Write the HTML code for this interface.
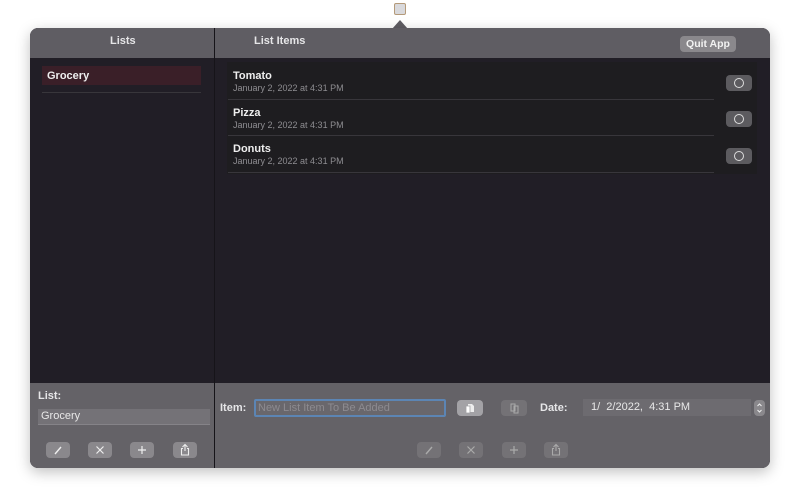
<!DOCTYPE html>
<html><head><meta charset="utf-8"><style>
*{margin:0;padding:0;box-sizing:border-box}
body{width:800px;height:500px;background:#fff;position:relative;overflow:hidden;font-family:"Liberation Sans",sans-serif;}
.a{position:absolute}
.win{left:30px;top:28px;width:740px;height:440px;border-radius:8px;background:#211e26;overflow:hidden;box-shadow:0 4px 14px rgba(0,0,0,0.25)}
.hdr{left:0;top:0;width:740px;height:30px;background:#5f5d63}
.bot{left:0;top:355px;width:740px;height:85px;background:#646267}
.vd{left:184px;top:0;width:1px;height:440px;background:#161419}
.t{color:#e6e6e8;font-weight:bold;font-size:11px}
.btn{background:#8a888c;border-radius:4px;width:24px;height:16px}
.btn2{background:#747276;border-radius:4px;width:24px;height:16px}
.btn svg,.btn2 svg{position:absolute;left:0;top:0}
.nm{color:#eee;font-weight:bold;font-size:11px}
.dt{color:#8e8d91;font-size:9px}
.sep{height:1px;background:#38363b}
.tg{width:26px;height:16px;background:#5c5b5f;border-radius:4px}
.tg:after{content:"";position:absolute;left:8px;top:3px;width:10px;height:10px;border:1.2px solid #ddd;border-radius:50%;box-sizing:border-box}
</style></head><body>
<div class="a" style="left:394px;top:3px;width:12px;height:12px;border:1.5px solid #b49a7a;background:#d9d9dc;border-radius:2px"></div>
<div class="a" style="left:392px;top:20px;width:0;height:0;border-left:8px solid transparent;border-right:8px solid transparent;border-bottom:9px solid #5f5d63"></div>
<div class="a win">
 <div class="a hdr"></div>
 <div class="a t" style="left:80px;top:7px">Lists</div>
 <div class="a t" style="left:224px;top:7px">List Items</div>
 <div class="a" style="left:650px;top:8px;width:56px;height:16px;background:#8a888c;border-radius:4px;color:#f2f2f2;font-size:10.5px;font-weight:bold;text-align:center;line-height:16px">Quit App</div>
 <div class="a" style="left:12px;top:38px;width:159px;height:19px;background:#3a1f28"></div>
 <div class="a nm" style="left:17px;top:42px">Grocery</div>
 <div class="a sep" style="left:12px;top:64px;width:159px"></div>
 <div class="a" style="left:197px;top:34px;width:530px;height:112px;background:#1e1d20"></div>
 <div class="a nm" style="left:203px;top:42px">Tomato</div>
 <div class="a dt" style="left:203px;top:55px">January 2, 2022 at 4:31 PM</div>
 <div class="a sep" style="left:198px;top:71px;width:486px"></div>
 <div class="a tg" style="left:696px;top:47px"></div>
 <div class="a nm" style="left:203px;top:79px">Pizza</div>
 <div class="a dt" style="left:203px;top:92px">January 2, 2022 at 4:31 PM</div>
 <div class="a sep" style="left:198px;top:107px;width:486px"></div>
 <div class="a tg" style="left:696px;top:83px"></div>
 <div class="a nm" style="left:203px;top:115px">Donuts</div>
 <div class="a dt" style="left:203px;top:128px">January 2, 2022 at 4:31 PM</div>
 <div class="a sep" style="left:198px;top:144px;width:486px"></div>
 <div class="a tg" style="left:696px;top:120px"></div>
 <div class="a bot"></div>
 <div class="a vd"></div>
 <div class="a t" style="left:8px;top:362px">List:</div>
 <div class="a" style="left:8px;top:381px;width:172px;height:16px;background:#747277;border-bottom:1px solid #858388;color:#e8e8e8;font-size:11px;padding-left:3px;line-height:15px">Grocery</div>
 <div class="a btn" style="left:16px;top:414px"><svg width="24" height="16"><path d="M9 12 L15 5" stroke="#eee" stroke-width="1.4"/></svg></div>
 <div class="a btn" style="left:58px;top:414px"><svg width="24" height="16"><path d="M8.5 4.5 L15.5 11.5 M15.5 4.5 L8.5 11.5" stroke="#eee" stroke-width="1.2"/></svg></div>
 <div class="a btn" style="left:100px;top:414px"><svg width="24" height="16"><path d="M12 4 V12 M8 8 H16" stroke="#eee" stroke-width="1.2"/></svg></div>
 <div class="a btn" style="left:143px;top:414px"><svg width="24" height="16"><path d="M12 2.5 V9 M9.5 5 L12 2.5 L14.5 5 M10 6.5 H8.5 V13 H15.5 V6.5 H14" stroke="#eee" stroke-width="1.1" fill="none"/></svg></div>
 <div class="a t" style="left:190px;top:374px">Item:</div>
 <div class="a" style="left:224px;top:371px;width:192px;height:18px;border:2px solid #5c85b4;border-radius:2px;background:#69676c;color:#8d8b90;font-size:11px;padding-left:2px;line-height:14px">New List Item To Be Added</div>
 <div class="a btn" style="left:427px;top:372px;width:26px;background:#a3a2a6"><svg width="26" height="16"><path d="M11 4 H15 L17 6 V12 H11 Z" fill="#eee"/><path d="M9 6 H13 V13 H9 Z" fill="#fff" stroke="#a3a2a6" stroke-width="0.8"/></svg></div>
 <div class="a btn2" style="left:471px;top:372px;width:26px"><svg width="26" height="16"><path d="M10 4 H14 V11 H10 Z M13 6 H17 V13 H13 Z" fill="none" stroke="#aaa" stroke-width="1"/></svg></div>
 <div class="a t" style="left:510px;top:374px">Date:</div>
 <div class="a" style="left:553px;top:371px;width:168px;height:17px;background:#6d6b70;color:#e8e8e8;font-size:11px;padding-left:8px;line-height:17px">1/&nbsp; 2/2022,&nbsp; 4:31 PM</div>
 <div class="a" style="left:724px;top:372px;width:11px;height:16px;background:#8a888c;border-radius:4px"><svg width="11" height="16" style="position:absolute;left:0;top:0"><path d="M3.5 6 L5.5 4 L7.5 6 M3.5 10 L5.5 12 L7.5 10" stroke="#eee" stroke-width="1" fill="none"/></svg></div>
 <div class="a btn2" style="left:387px;top:414px"><svg width="24" height="16"><path d="M9 12 L15 5" stroke="#aaa" stroke-width="1.4"/></svg></div>
 <div class="a btn2" style="left:429px;top:414px"><svg width="24" height="16"><path d="M8.5 4.5 L15.5 11.5 M15.5 4.5 L8.5 11.5" stroke="#aaa" stroke-width="1.2"/></svg></div>
 <div class="a btn2" style="left:472px;top:414px"><svg width="24" height="16"><path d="M12 4 V12 M8 8 H16" stroke="#aaa" stroke-width="1.2"/></svg></div>
 <div class="a btn2" style="left:514px;top:414px"><svg width="24" height="16"><path d="M12 2.5 V9 M9.5 5 L12 2.5 L14.5 5 M10 6.5 H8.5 V13 H15.5 V6.5 H14" stroke="#aaa" stroke-width="1.1" fill="none"/></svg></div>
</div>
</body></html>
